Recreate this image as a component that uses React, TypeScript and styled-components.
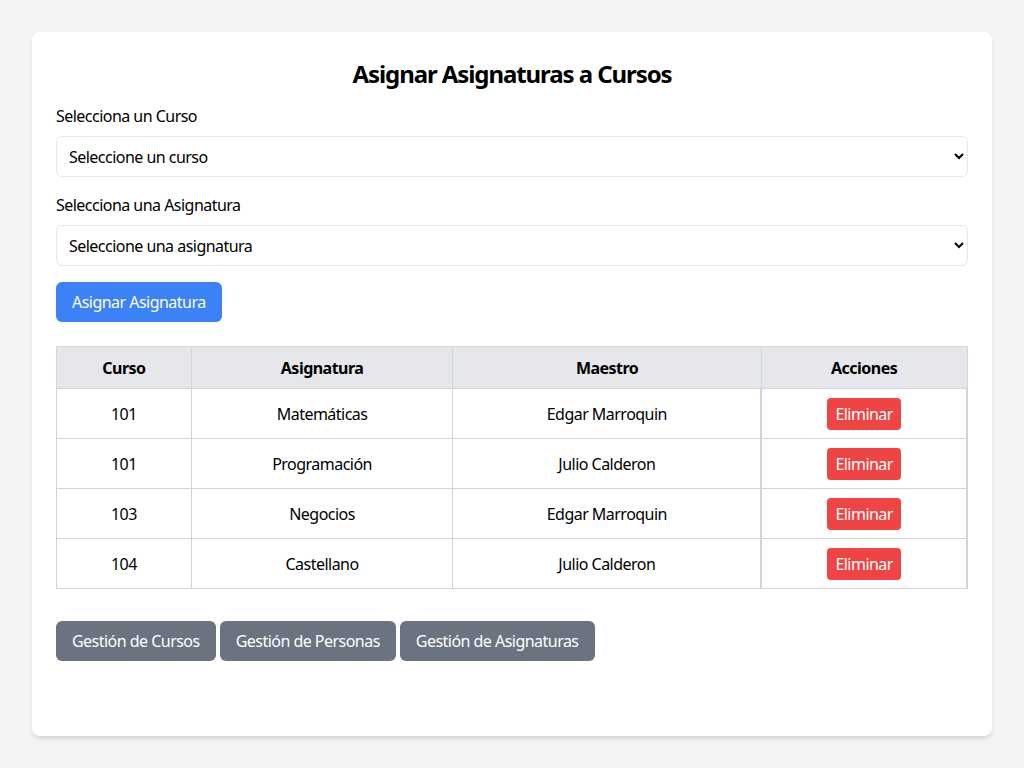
import React from "react";
import styled, { createGlobalStyle } from "styled-components";

const Global = createGlobalStyle`
  * { box-sizing: border-box; }
  body {
    margin: 0;
    background: #f3f4f6;
    font-family: "Noto Sans", "Open Sans", sans-serif;
    letter-spacing: -0.033em;
    color: #000;
  }
`;

const Page = styled.div`
  padding: 32px;
  min-height: 100vh;
  display: flex;
  flex-direction: column;
`;

const Card = styled.div`
  flex: 1;
  background: #fff;
  border-radius: 8px;
  box-shadow: 0 4px 6px -1px rgba(0,0,0,0.1), 0 2px 4px -2px rgba(0,0,0,0.1);
  padding: 24px;
`;

const Title = styled.h1`
  margin: 0 0 16px;
  font-size: 24px;
  line-height: 32px;
  padding-top: 2px;
  height: 32px;
  font-weight: 700;
  letter-spacing: -0.045em;
  text-align: center;
`;

const Field = styled.div`
  margin-bottom: 16px;
`;

const Label = styled.label`
  display: block;
  font-size: 16px;
  line-height: 24px;
  margin-bottom: 8px;
`;

const Select = styled.select`
  width: 100%;
  height: 41px;
  padding: 0 8px;
  border: 1px solid #e5e7eb;
  border-radius: 6px;
  background: #fff;
  font-family: inherit;
  letter-spacing: inherit;
  font-size: 16px;
  color: #000;
`;

const Button = styled.button<{ $tone: "blue" | "red" | "gray"; $small?: boolean }>`
  border: none;
  border-radius: ${(p) => (p.$small ? "4px" : "6px")};
  font-family: inherit;
  letter-spacing: inherit;
  font-size: 16px;
  line-height: 24px;
  color: #fff;
  padding: ${(p) => (p.$small ? "4px 8px" : "8px 16px")};
  background: ${(p) =>
    p.$tone === "blue" ? "#3b82f6" : p.$tone === "red" ? "#ef4444" : "#6b7280"};
`;

const Table = styled.table`
  width: 100%;
  border-collapse: collapse;
  margin-top: 24px;
  font-size: 16px;
`;

const Th = styled.th<{ $w: number }>`
  width: ${(p) => p.$w}px;
  background: #e5e7eb;
  border: 1px solid #d1d5db;
  height: 42px;
  font-weight: 700;
  text-align: center;
`;

const Td = styled.td<{ $action?: boolean }>`
  border: 1px solid #d1d5db;
  border-left-width: ${(p) => (p.$action ? "2px" : "1px")};
  border-right-width: ${(p) => (p.$action ? "2px" : "1px")};
  height: 50px;
  text-align: center;
`;

const Nav = styled.div`
  display: flex;
  gap: 4px;
  margin-top: 32px;
`;

const rows = [
  ["101", "Matemáticas", "Edgar Marroquin"],
  ["101", "Programación", "Julio Calderon"],
  ["103", "Negocios", "Edgar Marroquin"],
  ["104", "Castellano", "Julio Calderon"],
];

export default function App() {
  return (
    <Page>
      <Global />
      <Card>
        <Title>Asignar Asignaturas a Cursos</Title>
        <Field>
          <Label>Selecciona un Curso</Label>
          <Select defaultValue="">
            <option value="">Seleccione un curso</option>
          </Select>
        </Field>
        <Field>
          <Label>Selecciona una Asignatura</Label>
          <Select defaultValue="">
            <option value="">Seleccione una asignatura</option>
          </Select>
        </Field>
        <Button $tone="blue">Asignar Asignatura</Button>
        <Table>
          <thead>
            <tr>
              <Th $w={135}>Curso</Th>
              <Th $w={262}>Asignatura</Th>
              <Th $w={309}>Maestro</Th>
              <Th $w={206}>Acciones</Th>
            </tr>
          </thead>
          <tbody>
            {rows.map((r, i) => (
              <tr key={i}>
                <Td>{r[0]}</Td>
                <Td>{r[1]}</Td>
                <Td>{r[2]}</Td>
                <Td $action>
                  <Button $tone="red" $small>Eliminar</Button>
                </Td>
              </tr>
            ))}
          </tbody>
        </Table>
        <Nav>
          <Button $tone="gray">Gestión de Cursos</Button>
          <Button $tone="gray">Gestión de Personas</Button>
          <Button $tone="gray">Gestión de Asignaturas</Button>
        </Nav>
      </Card>
    </Page>
  );
}
